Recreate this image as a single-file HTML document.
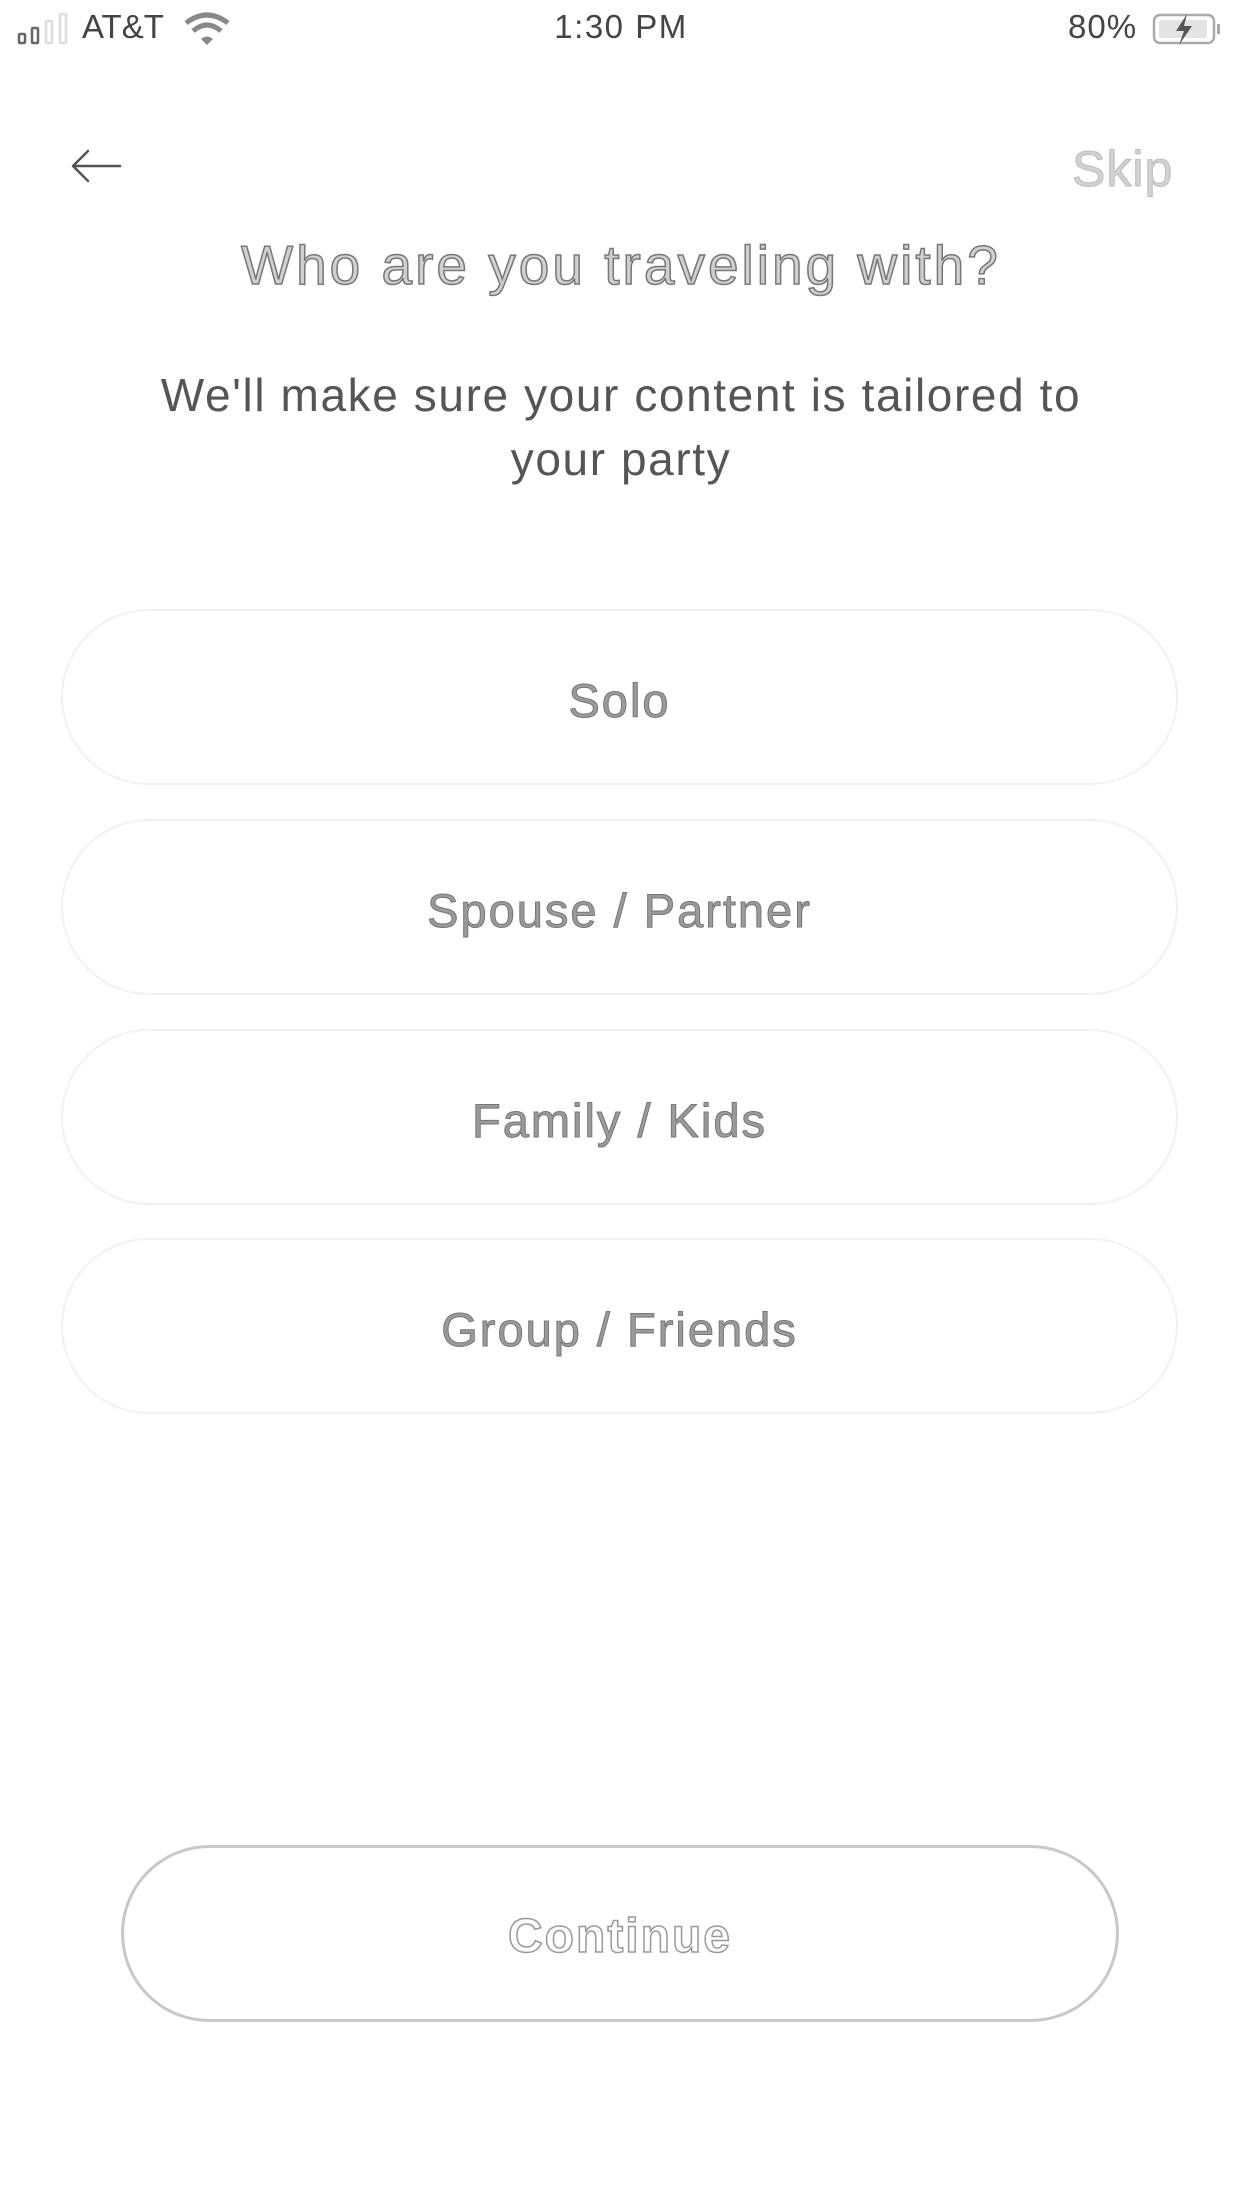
<!DOCTYPE html>
<html><head><meta charset="utf-8"><style>
html,body{margin:0;padding:0;background:#fff;}
body{width:1242px;height:2208px;position:relative;overflow:hidden;font-family:"Liberation Sans",sans-serif;}
.abs{position:absolute;}
.sb{font-size:33px;color:#444;top:8px;}
.opt{position:absolute;left:61px;width:1117px;height:176px;border:2px solid #f1f1f1;border-radius:88px;box-sizing:border-box;display:flex;align-items:center;justify-content:center;font-size:47px;letter-spacing:2px;color:#9a9a9a;-webkit-text-stroke:1px #777;padding-top:6px;}
</style></head><body>
<svg class="abs" style="left:16px;top:12px" width="56" height="34">
 <rect x="3" y="22" width="6" height="9" rx="1" fill="none" stroke="#666" stroke-width="2.5"/>
 <rect x="16" y="16" width="6" height="15" rx="1" fill="none" stroke="#666" stroke-width="2.5"/>
 <rect x="30" y="9" width="6" height="22" rx="1" fill="none" stroke="#ddd" stroke-width="2.5"/>
 <rect x="44" y="2" width="6" height="29" rx="1" fill="none" stroke="#ddd" stroke-width="2.5"/>
</svg>
<div class="abs sb" style="left:82px;">AT&amp;T</div>
<svg class="abs" style="left:183px;top:12px" width="48" height="34">
 <path d="M3 11 Q24 -5 45 11" fill="none" stroke="#888" stroke-width="5"/>
 <path d="M10 19 Q24 7 38 19" fill="none" stroke="#888" stroke-width="5"/>
 <path d="M18 27 L24 33 L30 27 Q24 22 18 27Z" fill="#888"/>
</svg>
<div class="abs sb" style="left:0;width:1242px;text-align:center;letter-spacing:1.5px;">1:30 PM</div>
<div class="abs sb" style="left:1068px;letter-spacing:1px;">80%</div>
<svg class="abs" style="left:1152px;top:12px" width="72" height="34">
 <rect x="2" y="3" width="60" height="28" rx="6" fill="none" stroke="#aaa" stroke-width="2.5"/>
 <rect x="7" y="8" width="48" height="18" rx="2" fill="#e4e4e4"/>
 <path d="M35 2 L24 19 L32 19 L27 33 L40 14 L32 14 Z" fill="#555"/>
 <rect x="65" y="12" width="3" height="10" fill="#aaa"/>
</svg>
<svg class="abs" style="left:68px;top:148px" width="56" height="36">
 <path d="M52 18 H5 M20 3 L5 18 L20 33" fill="none" stroke="#555" stroke-width="2.5" stroke-linecap="round" stroke-linejoin="round"/>
</svg>
<div class="abs" style="left:1072px;top:140px;font-size:50px;letter-spacing:1px;color:#d2d2d2;-webkit-text-stroke:1px #bbb;">Skip</div>
<div class="abs" style="left:0;width:1242px;top:233px;text-align:center;font-size:55px;letter-spacing:3px;color:#d0d0d0;-webkit-text-stroke:1.5px #777;">Who are you traveling with?</div>
<div class="abs" style="left:126px;width:990px;top:363px;text-align:center;font-size:46px;letter-spacing:1.6px;line-height:64px;color:#555;">We'll make sure your content is tailored to your party</div>
<div class="opt" style="top:609px;">Solo</div>
<div class="opt" style="top:819px;">Spouse / Partner</div>
<div class="opt" style="top:1029px;">Family / Kids</div>
<div class="opt" style="top:1238px;">Group / Friends</div>
<div class="abs" style="left:121px;top:1845px;width:998px;height:177px;border:3px solid #c8c8c8;border-radius:90px;box-sizing:border-box;display:flex;align-items:center;justify-content:center;font-size:48px;letter-spacing:2px;font-weight:bold;color:#fff;-webkit-text-stroke:1.5px #999;padding-top:6px;">Continue</div>
</body></html>
